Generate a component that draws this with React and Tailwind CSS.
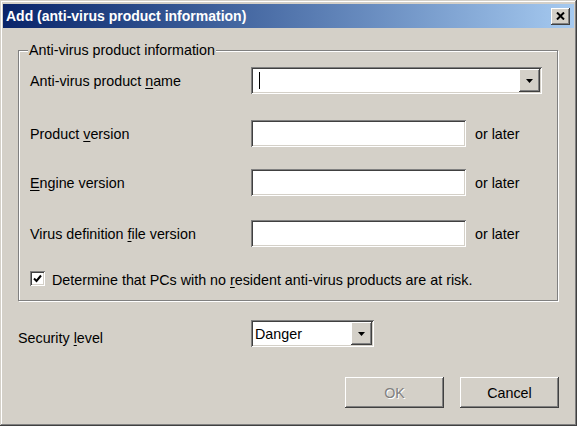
import React from "react";

const raised =
  "shadow-[inset_-1px_-1px_#404040,inset_1px_1px_#fff,inset_-2px_-2px_#808080,inset_2px_2px_#d4d0c8]";
const sunken =
  "shadow-[inset_1px_1px_#808080,inset_-1px_-1px_#fff,inset_2px_2px_#404040,inset_-2px_-2px_#d4d0c8]";

function Arrow() {
  return (
    <svg width="7" height="4" viewBox="0 0 7 4">
      <path d="M0 0h7L3.5 4z" fill="#000" />
    </svg>
  );
}

function DropButton() {
  return (
    <div className={`w-[21px] h-full bg-[#d4d0c8] flex items-center justify-center ${raised}`}>
      <Arrow />
    </div>
  );
}

function TextBox() {
  return <div className={`w-[215px] h-[27px] bg-white ${sunken}`} />;
}

function Row({ label, className = "" }) {
  return (
    <div className={`flex items-center h-[27px] ${className}`}>
      <div className="w-[221px]">{label}</div>
      <TextBox />
      <span className="ml-[9px]">or later</span>
    </div>
  );
}

export default function App() {
  return (
    <div className="w-[577px] h-[426px] bg-[#d4d0c8] px-[3px] pt-[4px] flex flex-col text-[14.3px] leading-[16px] text-black font-['Liberation_Sans',Arial,sans-serif] shadow-[inset_-1px_-1px_#404040,inset_1px_1px_#d4d0c8,inset_-2px_-2px_#808080,inset_2px_2px_#fff]">
      {/* Title bar */}
      <div className="h-[24px] flex items-center justify-between pl-[3px] pr-[4px] bg-gradient-to-r from-[#0a246a] to-[#a6caf0]">
        <span className="text-white font-bold text-[14px]">Add (anti-virus product information)</span>
        <div className={`w-[19px] h-[17px] bg-[#d4d0c8] flex items-center justify-center ${raised}`}>
          <svg width="9" height="8" viewBox="0 0 9 8">
            <path d="M1 0.5l7 7M8 0.5l-7 7" stroke="#000" strokeWidth="2" />
          </svg>
        </div>
      </div>

      {/* Group box */}
      <fieldset className="ml-[15px] mt-[14px] w-[540px] border border-[#808080] pl-[11px] pb-[12px] shadow-[1px_1px_0_#fff,inset_1px_1px_0_#fff]">
        <legend className="-ml-[2px] px-[1px] leading-[16px] bg-[#d4d0c8]">Anti-virus product information</legend>

        <div className="flex items-center h-[27px] mt-[9px]">
          <div className="w-[221px]">
            Anti-virus product <u className="underline-offset-2">n</u>ame
          </div>
          <div className={`w-[291px] h-[27px] bg-white p-[2px] flex items-center ${sunken}`}>
            <div className="w-px h-[17px] bg-black ml-[6px]" />
            <div className="flex-1" />
            <DropButton />
          </div>
        </div>

        <Row className="mt-[26px]" label={<>Product <u className="underline-offset-2">v</u>ersion</>} />
        <Row className="mt-[22px]" label={<><u className="underline-offset-2">E</u>ngine version</>} />
        <Row className="mt-[24px]" label={<>Virus definition <u className="underline-offset-2">f</u>ile version</>} />

        <div className="flex items-start h-[17px] mt-[24px]">
          <div className={`w-[15px] h-[15px] bg-white flex items-center justify-center ${sunken}`}>
            <svg width="9" height="9" viewBox="0 0 9 9">
              <path d="M1 4.5l2.5 2.5L8 1.5" stroke="#000" strokeWidth="2" fill="none" />
            </svg>
          </div>
          <span className="ml-[7px] mt-[1px]">
            Determine that PCs with no <u className="underline-offset-2">r</u>esident anti-virus products are at risk.
          </span>
        </div>
      </fieldset>

      {/* Security level */}
      <div className="flex items-center ml-[15px] mt-[19px] h-[27px]">
        <div className="w-[233px] mt-[8px]">
          Security <u className="underline-offset-2">l</u>evel
        </div>
        <div className={`w-[123px] h-[27px] bg-white p-[2px] flex items-center ${sunken}`}>
          <span className="pl-[2px] flex-1">Danger</span>
          <DropButton />
        </div>
      </div>

      {/* Buttons */}
      <div className="flex justify-end gap-[16px] mr-[15px] mt-[30px]">
        <button className={`w-[99px] h-[31px] bg-[#d4d0c8] text-[#808080] [text-shadow:1px_1px_#fff] ${raised}`}>OK</button>
        <button className={`w-[99px] h-[31px] bg-[#d4d0c8] ${raised}`}>Cancel</button>
      </div>
    </div>
  );
}
